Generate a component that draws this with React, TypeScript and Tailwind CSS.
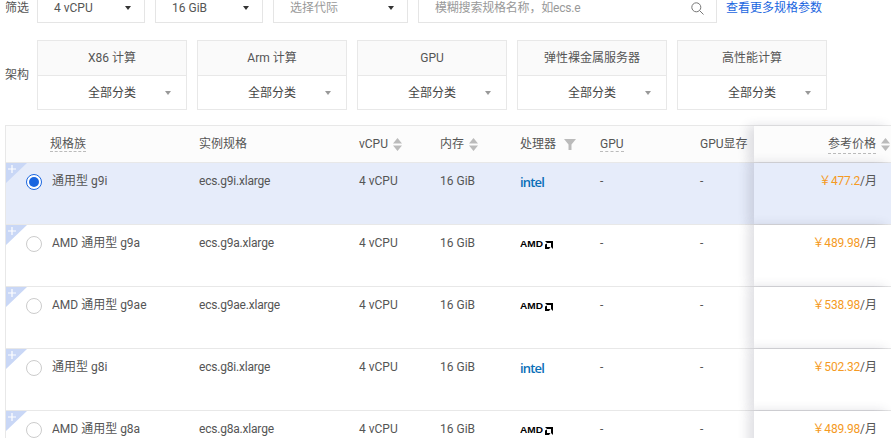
const font = '[font-family:Roboto,"Noto_Sans_CJK_SC",sans-serif]'

const rows = [
  { name: '通用型 g9i', spec: 'ecs.g9i.xlarge', cpu: 'intel', price: '477.2', selected: true },
  { name: 'AMD 通用型 g9a', spec: 'ecs.g9a.xlarge', cpu: 'amd', price: '489.98' },
  { name: 'AMD 通用型 g9ae', spec: 'ecs.g9ae.xlarge', cpu: 'amd', price: '538.98' },
  { name: '通用型 g8i', spec: 'ecs.g8i.xlarge', cpu: 'intel', price: '502.32' },
  { name: 'AMD 通用型 g8a', spec: 'ecs.g8a.xlarge', cpu: 'amd', price: '489.98' },
]

const archs = ['X86 计算', 'Arm 计算', 'GPU', '弹性裸金属服务器', '高性能计算']

function Caret({ dark = false }: { dark?: boolean }) {
  return (
    <svg width="6" height="4" viewBox="0 0 6 4" className="shrink-0">
      <path d="M0 0h6L3 4z" fill={dark ? '#333' : '#999'} />
    </svg>
  )
}

function SortIcon() {
  return (
    <svg width="9" height="13" viewBox="0 0 9 13" className="shrink-0">
      <path d="M4.5 0L9 5.5H0z M0 7.5h9L4.5 13z" fill="#bbb" />
    </svg>
  )
}

function FilterSelect({ label, width, muted = false }: { label: string; width: string; muted?: boolean }) {
  return (
    <div className={`flex h-[30px] items-center justify-between border border-[#e5e5e5] pr-[13px] pl-4 ${width} ${muted ? 'text-[#999]' : 'text-[#555]'}`}>
      <span>{label}</span>
      <Caret dark />
    </div>
  )
}

function AmdLogo() {
  return (
    <div className="mt-[5px] flex items-center text-black">
      <span className="mr-[1px] inline-block w-[24px] origin-left font-['Liberation_Sans'] text-[9px] leading-none font-bold [transform:scaleX(1.12)]">AMD</span>
      <svg width="8" height="8" viewBox="0 0 8 8">
        <path d="M0 0h8v8L6 6V2H2zM0 8V3.5L2 2.5v3.5h3.5L4 8z" fill="#000" />
      </svg>
    </div>
  )
}

function IntelLogo() {
  return (
    <div className="font-['Open_Sans'] text-[13px] leading-[18px] font-semibold tracking-[-0.8px] text-[#0a6fb8]">intel</div>
  )
}

function DashedLabel({ children }: { children: string }) {
  return <span className="border-b border-dashed border-[#bbb] leading-[18px]">{children}</span>
}

function Row({ row }: { row: (typeof rows)[number] }) {
  return (
    <div className={`relative grid h-[62px] grid-cols-[44px_149px_160px_81px_80px_80px_100px_54px_137px] border-b border-[#e8e8e8] text-[#555] ${row.selected ? 'bg-[#e6ecfa]' : 'bg-white'}`}>
      <div className="absolute top-0 left-0">
        <svg width="21" height="20" viewBox="0 0 21 20">
          <path d="M0 0h21L0 20z" fill="#c9d7f6" />
          <path d="M6 2v8M2 6h8" stroke="#fff" strokeWidth="1.2" />
        </svg>
      </div>
      <div className="pt-[11px] pl-[20px]">
        {row.selected ? (
          <div className="flex h-[16px] w-[16px] items-center justify-center rounded-full border border-[#1a66e0] bg-white">
            <div className="h-[10px] w-[10px] rounded-full bg-[#1a66e0]" />
          </div>
        ) : (
          <div className="h-[16px] w-[16px] rounded-full border border-[#ccc] bg-white" />
        )}
      </div>
      <div className="pt-[9px] pl-[2px]">{row.name}</div>
      <div className="pt-[9px] tracking-[-0.2px]">{row.spec}</div>
      <div className="pt-[9px]">4 vCPU</div>
      <div className="pt-[9px]">16 GiB</div>
      <div className="pt-[10px]">{row.cpu === 'intel' ? <IntelLogo /> : <AmdLogo />}</div>
      <div className="pt-[9px]">-</div>
      <div className="pt-[9px]">-</div>
      <div className={`z-10 pt-[9px] pr-[14px] text-right shadow-[-6px_0_10px_rgba(60,60,90,0.16)] ${row.selected ? 'bg-[#e6ecfa]' : 'bg-white'}`}>
        <span className="tracking-[-0.2px] text-[#f59a23]">￥{row.price}</span>/月
      </div>
    </div>
  )
}

export default function App() {
  return (
    <div className={`h-[438px] w-[891px] overflow-hidden bg-white text-[12px] leading-[18px] ${font}`}>
      {/* Filters */}
      <div className="-mt-[7px] flex items-center pl-[5px]">
        <div className="w-[32px] text-[#555]">筛选</div>
        <div className="flex items-center gap-[10px]">
          <FilterSelect label="4 vCPU" width="w-[108px]" />
          <FilterSelect label="16 GiB" width="w-[108px]" />
          <FilterSelect label="选择代际" width="w-[135px]" muted />
          <div className="flex h-[30px] w-[299px] items-center justify-between border border-[#e5e5e5] pr-[12px] pl-4 text-[#999]">
            <span className="tracking-[-0.2px]">模糊搜索规格名称，如ecs.e</span>
            <svg width="13" height="13" viewBox="0 0 13 13" fill="none" stroke="#777" strokeWidth="1">
              <circle cx="5.3" cy="5.3" r="4.5" />
              <path d="M8.5 8.5l4 4" />
            </svg>
          </div>
        </div>
        <a className="ml-[9px] text-[#1a66e0]">查看更多规格参数</a>
      </div>

      {/* Architecture */}
      <div className="mt-[17px] flex items-center pl-[5px]">
        <div className="w-[32px] text-[#555]">架构</div>
        <div className="flex gap-[10px]">
          {archs.map((a) => (
            <div key={a} className="w-[150px] border border-[#e8e8e8]">
              <div className="flex h-[35px] items-center justify-center border-b border-[#e8e8e8] bg-[#fafafa] text-[#555]">{a}</div>
              <div className="flex h-[33px] items-center text-[#444]">
                <span className="ml-[50px]">全部分类</span>
                <span className="ml-[29px]"><Caret /></span>
              </div>
            </div>
          ))}
        </div>
      </div>

      {/* Table */}
      <div className="mt-[15px] ml-[5px] border-t border-l border-[#e8e8e8]">
        <div className="grid h-[37px] grid-cols-[44px_149px_160px_81px_80px_80px_100px_54px_137px] items-center border-b border-[#e8e8e8] bg-[#fcfcfc] text-[#555]">
          <div />
          <div><DashedLabel>规格族</DashedLabel></div>
          <div>实例规格</div>
          <div className="flex items-center gap-[5px]">vCPU <SortIcon /></div>
          <div className="flex items-center gap-[5px]">内存 <SortIcon /></div>
          <div className="flex items-center gap-[8px]">
            处理器
            <svg width="12" height="11" viewBox="0 0 12 11"><path d="M0 0h12L7.5 5.5V11h-3V5.5z" fill="#bbb" /></svg>
          </div>
          <div><DashedLabel>GPU</DashedLabel></div>
          <div className="whitespace-nowrap">GPU显存</div>
          <div className="z-10 flex h-full items-center justify-end gap-[5px] bg-[#fcfcfc] pr-[1px] shadow-[-6px_0_10px_rgba(60,60,90,0.16)]">
            <DashedLabel>参考价格</DashedLabel>
            <SortIcon />
          </div>
        </div>
        {rows.map((r) => (
          <Row key={r.spec} row={r} />
        ))}
      </div>
    </div>
  )
}
